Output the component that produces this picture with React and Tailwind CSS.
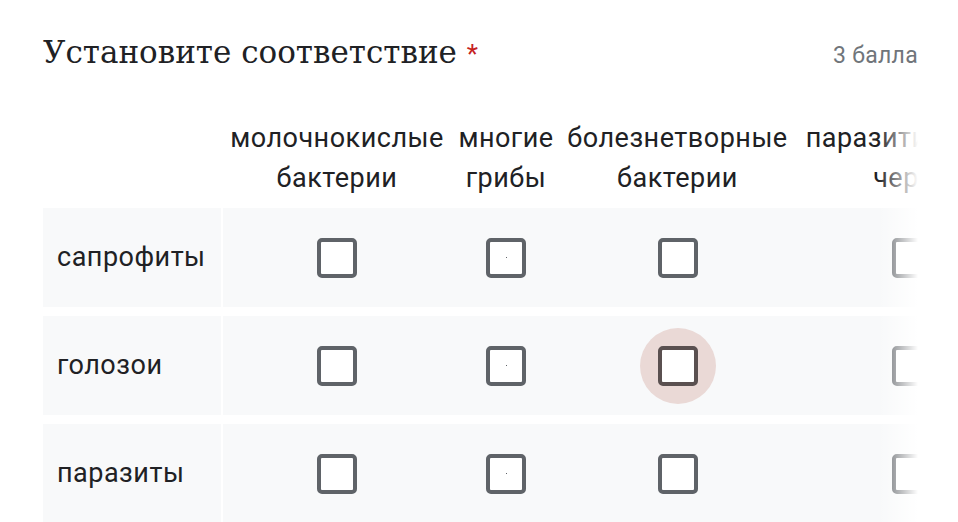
import React from "react";

const columns = [
  { label: "молочнокислые бактерии", width: "w-[228px]" },
  { label: "многие грибы", width: "w-[110px]" },
  { label: "болезнетворные бактерии", width: "w-[233px]" },
  { label: "паразитические черви", width: "w-[236px]" },
];

const rows = ["сапрофиты", "голозои", "паразиты"];

function Checkbox({ dot, hover }) {
  const box = (
    <span
      className={
        "flex h-[40px] w-[40px] items-center justify-center rounded-[5px] border-[4px] bg-white " +
        (hover ? "border-[#5a5050]" : "border-[#5f6368]")
      }
    >
      {dot && <span className="h-px w-px bg-[#5f6368]" />}
    </span>
  );
  if (hover) {
    return (
      <span className="flex h-[76px] w-[76px] items-center justify-center rounded-full bg-[#ead9d6]">
        {box}
      </span>
    );
  }
  return box;
}

export default function App() {
  return (
    <div className="min-h-screen bg-white pl-[43px] pr-[40px] font-['Roboto',sans-serif] text-[#202124]">
      {/* Question header */}
      <div className="flex items-baseline justify-between pt-[32px]">
        <h2 className="font-['DejaVu_Serif',serif] text-[31px] leading-[40px] text-[#202124]">
          Установите соответствие{" "}
          <span className="font-['Roboto',sans-serif] text-[26px] text-[#c5221f]">*</span>
        </h2>
        <span className="text-[23px] tracking-[0.3px] text-[#70757a]">3 балла</span>
      </div>

      {/* Grid */}
      <div className="relative mt-[44px] overflow-hidden">
        <div className="flex">
          <div className="w-[180px] shrink-0" />
          {columns.map((c) => (
            <div
              key={c.label}
              className={`${c.width} shrink-0 px-[6px] text-center text-[27px] leading-[40px] tracking-[0.5px]`}
            >
              {c.label}
            </div>
          ))}
        </div>

        <div className="mt-[10px] flex flex-col gap-[9px]">
          {rows.map((r, ri) => (
            <div key={r} className="flex h-[99px]">
              <div className="flex w-[178px] shrink-0 items-center bg-[#f8f9fa] pl-[14px] text-[27px] tracking-[0.5px]">
                {r}
              </div>
              <div className="w-[2px] shrink-0 bg-white" />
              {columns.map((c, ci) => (
                <div
                  key={c.label}
                  className={`${c.width} flex shrink-0 items-center justify-center bg-[#f8f9fa]`}
                >
                  <Checkbox dot={ci === 1} hover={ri === 1 && ci === 2} />
                </div>
              ))}
            </div>
          ))}
        </div>

        {/* right fade */}
        <div className="pointer-events-none absolute inset-y-0 right-0 w-[40px] bg-gradient-to-r from-white/0 to-white" />
      </div>
    </div>
  );
}
